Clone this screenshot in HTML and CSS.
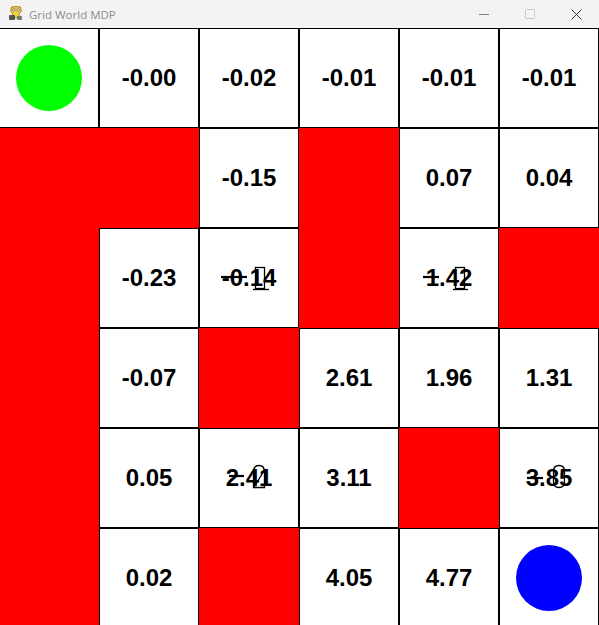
FILE: index.html
```html
<!DOCTYPE html>
<html lang="en">
<head>
    <meta charset="UTF-8">
    <title>Grid World MDP</title>
    <link rel="stylesheet" href="styles.css">
</head>
<body>
    <div class="titlebar">
        <svg class="app-icon" width="16" height="16" viewBox="0 0 16 16">
            <path d="M3 3 Q3 0 6 1 Q8 -0.5 10 1 Q13 0 13 3 Q14 6 11 8 L11 11 Q8 13 5 11 L5 8 Q2 6 3 3 Z" fill="#f4d03f" stroke="#8a6d1a" stroke-width="0.8"/>
            <circle cx="6" cy="4" r="1.3" fill="#fff" stroke="#333" stroke-width="0.5"/>
            <circle cx="10" cy="4" r="1.3" fill="#fff" stroke="#333" stroke-width="0.5"/>
            <rect x="1" y="9" width="6" height="5" rx="1" fill="#555"/>
            <rect x="9" y="10" width="5" height="4" rx="1" fill="#777"/>
        </svg>
        <span class="title">Grid World MDP</span>
        <div class="controls">
            <span class="ctl"><svg width="10" height="10" viewBox="0 0 10 10"><line x1="0" y1="5.5" x2="10" y2="5.5" stroke="#222" stroke-width="1"/></svg></span>
            <span class="ctl"><svg width="10" height="10" viewBox="0 0 10 10"><rect x="0.5" y="0.5" width="9" height="9" rx="1" fill="none" stroke="#c8c8c8" stroke-width="1"/></svg></span>
            <span class="ctl"><svg width="11" height="11" viewBox="0 0 11 11"><path d="M0.5 0.5 L10.5 10.5 M10.5 0.5 L0.5 10.5" stroke="#333" stroke-width="1"/></svg></span>
        </div>
    </div>

    <div class="grid">
        <!-- row 0 -->
        <div class="cell"><span class="dot start"></span></div>
        <div class="cell">-0.00</div>
        <div class="cell">-0.02</div>
        <div class="cell">-0.01</div>
        <div class="cell">-0.01</div>
        <div class="cell">-0.01</div>
        <!-- row 1 -->
        <div class="wall"></div>
        <div class="wall"></div>
        <div class="cell">-0.15</div>
        <div class="wall"></div>
        <div class="cell">0.07</div>
        <div class="cell">0.04</div>
        <!-- row 2 -->
        <div class="wall"></div>
        <div class="cell">-0.23</div>
        <div class="cell">-0.14
            <svg class="arrow" viewBox="0 0 100 100"><line class="shaft" x1="22" y1="49" x2="48" y2="49"/><rect x="56.5" y="39.5" width="9" height="21"/><line x1="54" y1="61.5" x2="70" y2="61.5"/></svg>
        </div>
        <div class="wall"></div>
        <div class="cell">1.42
            <svg class="arrow" viewBox="0 0 100 100"><line class="shaft" x1="24" y1="49" x2="40" y2="49"/><rect x="56.5" y="39.5" width="9" height="21"/><line x1="54" y1="61.5" x2="69" y2="61.5"/></svg>
        </div>
        <div class="wall"></div>
        <!-- row 3 -->
        <div class="wall"></div>
        <div class="cell">-0.07</div>
        <div class="wall"></div>
        <div class="cell">2.61</div>
        <div class="cell">1.96</div>
        <div class="cell">1.31</div>
        <!-- row 4 -->
        <div class="wall"></div>
        <div class="cell">0.05</div>
        <div class="cell">2.41
            <svg class="arrow" viewBox="0 0 100 100"><line class="shaft" x1="30" y1="48" x2="45" y2="48"/><path d="M54.5 59.5 L54.5 44 Q54.5 37.5 60 37.5 Q65.5 37.5 65.5 44 L65.5 59.5 Z M55 59 L65 43"/></svg>
        </div>
        <div class="cell">3.11</div>
        <div class="wall"></div>
        <div class="cell">3.85
            <svg class="arrow" viewBox="0 0 100 100"><line class="shaft" x1="28" y1="50" x2="44" y2="50"/><path d="M54.5 43 Q54.5 37.5 60 37.5 Q65.5 37.5 65.5 43 L65.5 54 Q65.5 59.5 60 59.5 Q54.5 59.5 54.5 54 Z"/></svg>
        </div>
        <!-- row 5 -->
        <div class="wall"></div>
        <div class="cell">0.02</div>
        <div class="wall"></div>
        <div class="cell">4.05</div>
        <div class="cell">4.77</div>
        <div class="cell"><span class="dot goal"></span></div>
    </div>
</body>
</html>
```

FILE: styles.css
```css
body {
    margin: 0;
    padding: 0;
    background-color: #fff;
    overflow: hidden;
}
.titlebar {
    height: 28px;
    display: flex;
    align-items: center;
    background-color: #f3f3f3;
    font-family: "Open Sans", "Noto Sans", sans-serif;
}
.app-icon {
    margin-left: 8px;
    margin-right: 5px;
}
.title {
    font-size: 11.5px;
    color: #8c8c8c;
}
.controls {
    margin-left: auto;
    display: flex;
    height: 100%;
}
.ctl {
    width: 46px;
    display: flex;
    align-items: center;
    justify-content: center;
}
.ctl:first-child {
    opacity: 0.55;
}
.grid {
    display: grid;
    grid-template-columns: repeat(6, 100px);
    grid-auto-rows: 100px;
    margin-left: -1px;
}
.cell {
    position: relative;
    box-sizing: border-box;
    border: 1px solid #000;
    background: #fff;
    display: flex;
    align-items: center;
    justify-content: center;
    font-family: "Liberation Sans", Arial, sans-serif;
    font-weight: bold;
    font-size: 24px;
    color: #000;
}
.wall {
    background: #ff0000;
}
.dot {
    width: 66px;
    height: 66px;
    border-radius: 50%;
}
.dot.start {
    background: #00ff00;
}
.dot.goal {
    background: #0000ff;
}
.arrow {
    position: absolute;
    left: -1px;
    top: -1px;
    width: 100px;
    height: 100px;
    fill: none;
    stroke: #000;
    stroke-width: 1.3;
}
.arrow .shaft {
    stroke-width: 2.2;
}
```
